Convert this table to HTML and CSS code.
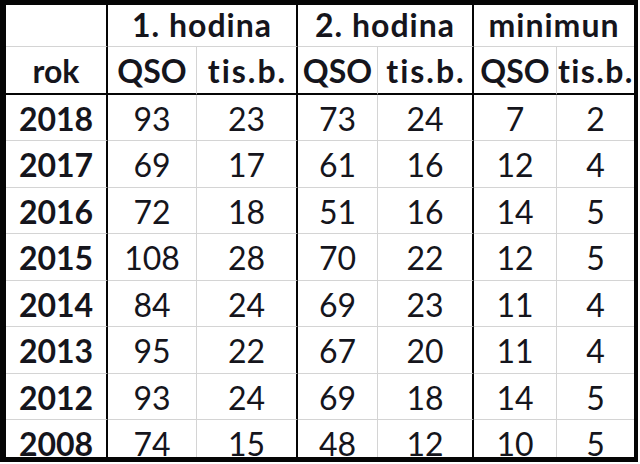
FILE: index.html
```html
<!DOCTYPE html>
<html lang="cs">
<head>
<meta charset="utf-8">
<title>QSO tabulka</title>
<link rel="stylesheet" href="styles.css">
</head>
<body>
<div class="sheet">
  <div class="row hr1">
    <div></div>
    <div class="span2">1. hodina</div>
    <div class="span2">2. hodina</div>
    <div class="span2">minimun</div>
  </div>
  <div class="row hr2">
    <div>rok</div>
    <div>QSO</div>
    <div class="tb">tis.b.</div>
    <div>QSO</div>
    <div class="tb">tis.b.</div>
    <div>QSO</div>
    <div class="tb edge">tis.b.</div>
  </div>
  <div class="row body"><div>2018</div><div>93</div><div>23</div><div>73</div><div>24</div><div>7</div><div>2</div></div>
  <div class="row body"><div>2017</div><div>69</div><div>17</div><div>61</div><div>16</div><div>12</div><div>4</div></div>
  <div class="row body"><div>2016</div><div>72</div><div>18</div><div>51</div><div>16</div><div>14</div><div>5</div></div>
  <div class="row body"><div>2015</div><div>108</div><div>28</div><div>70</div><div>22</div><div>12</div><div>5</div></div>
  <div class="row body"><div>2014</div><div>84</div><div>24</div><div>69</div><div>23</div><div>11</div><div>4</div></div>
  <div class="row body"><div>2013</div><div>95</div><div>22</div><div>67</div><div>20</div><div>11</div><div>4</div></div>
  <div class="row body"><div>2012</div><div>93</div><div>24</div><div>69</div><div>18</div><div>14</div><div>5</div></div>
  <div class="row body last"><div>2008</div><div>74</div><div>15</div><div>48</div><div>12</div><div>10</div><div>5</div></div>
</div>
</body>
</html>
```

FILE: styles.css
```css
html, body {
  margin: 0;
  padding: 0;
  background: #ffffff;
}

.sheet {
  width: 628px;
  border-style: solid;
  border-color: #050505;
  border-width: 5px 4px 5px 6px;
  display: grid;
  grid-template-columns: 102px 89px 101px 80px 96px 83px 77px;
  grid-template-rows: 42px 48px 46px 47px 46px 47px 46px 47px 46px 37px;
  font-family: Lato, "Open Sans", sans-serif;
  font-size: 32px;
  line-height: 1;
  color: #15151c;
}

.row {
  display: contents;
}

.row > div {
  box-sizing: border-box;
  display: flex;
  justify-content: center;
  align-items: flex-start;
  white-space: nowrap;
}

.span2 {
  grid-column: span 2;
}

/* header row 1 */
.hr1 > div {
  font-weight: 700;
  letter-spacing: 1px;
  padding-top: 4px;
  border-bottom: 1px solid #d4d4d4;
  border-right: 2px solid #050505;
}
.hr1 > div:last-child {
  border-right: 0;
}

/* header row 2 and body rows */
.hr2 > div,
.body > div {
  padding-top: 8px;
}
.hr2 > div {
  font-weight: 700;
  border-bottom: 2px solid #050505;
}
.hr2 > .tb {
  letter-spacing: 2px;
  padding-left: 2px;
}
.body > div {
  border-bottom: 1px solid #d4d4d4;
}
.body > div:first-child {
  font-weight: 700;
}
.body.last > div {
  border-bottom: 0;
}

.hr2 > div:nth-child(odd),
.body > div:nth-child(odd) {
  border-right: 2px solid #050505;
}
.hr2 > div:nth-child(even),
.body > div:nth-child(even) {
  border-right: 1px solid #d4d4d4;
}
.hr2 > div:nth-child(7),
.body > div:nth-child(7) {
  border-right: 0;
}

.hr2 > .edge {
  justify-content: flex-start;
  letter-spacing: 1.4px;
  padding-left: 1px;
}
```
